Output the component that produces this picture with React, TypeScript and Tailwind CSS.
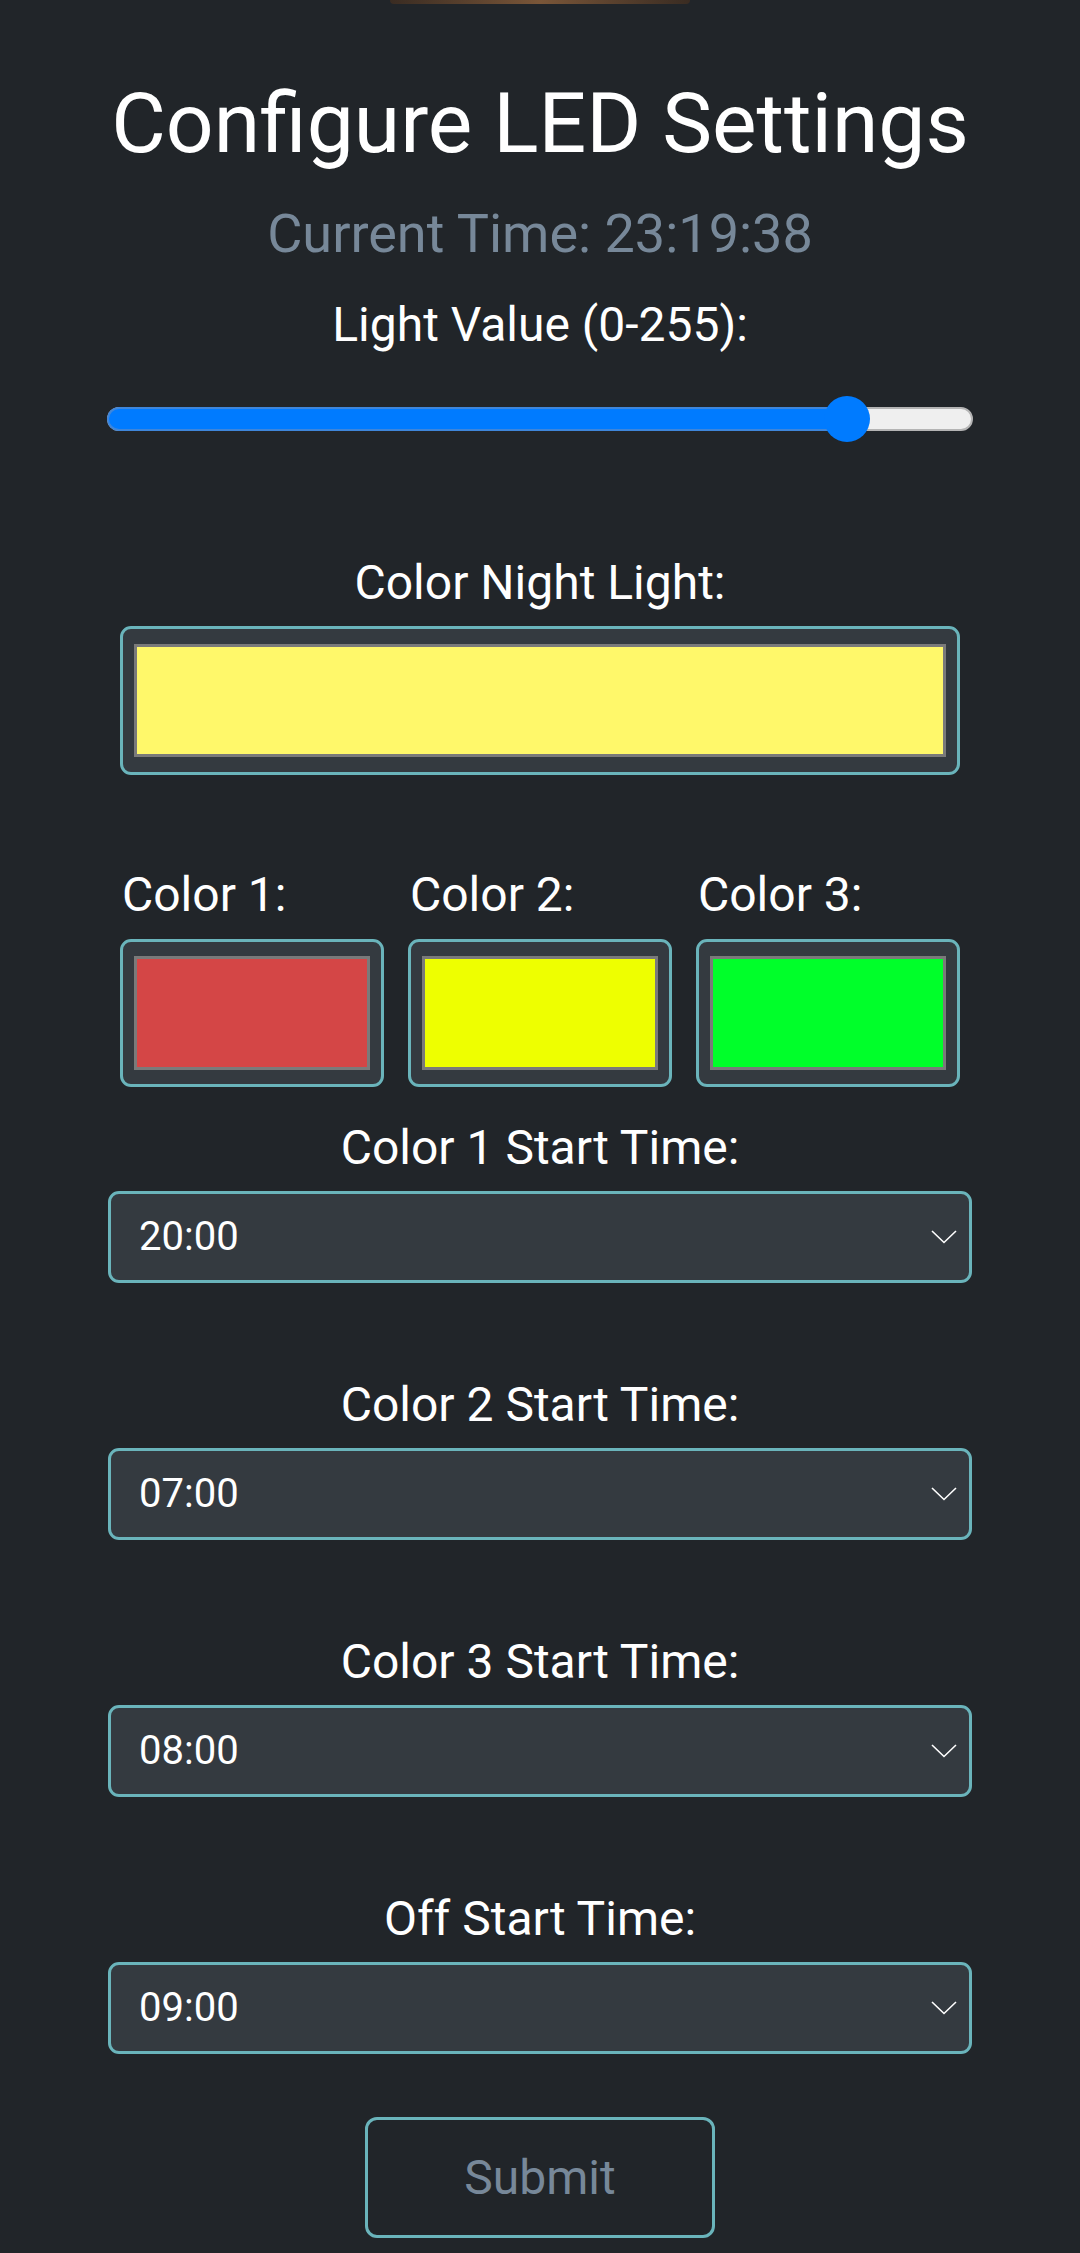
import { useState } from "react"

const swatches = [
	{ label: "Color 1:", color: "bg-[#d44646]" },
	{ label: "Color 2:", color: "bg-[#eeff00]" },
	{ label: "Color 3:", color: "bg-[#00ff2a]" },
]

const schedules = [
	{ label: "Color 1 Start Time:", value: "20:00" },
	{ label: "Color 2 Start Time:", value: "07:00" },
	{ label: "Color 3 Start Time:", value: "08:00" },
	{ label: "Off Start Time:", value: "09:00" },
]

const Chevron = () => (
	<svg width="26" height="14" viewBox="0 0 26 14" fill="none" className="shrink-0">
		<polyline points="1,1 13,12.5 25,1" stroke="#ffffff" strokeWidth="1.6" />
	</svg>
)

const TimeSelect = ({ label, value, first }: { label: string; value: string; first: boolean }) => (
	<div className={first ? "mt-[34px] flex flex-col" : "mt-[95px] flex flex-col"}>
		<div className="text-center text-[48px] leading-[53px] text-white">{label}</div>
		<div className="mt-[17px] mx-[108px] h-[92px] rounded-[11px] border-[3px] border-[#6ab4bb] bg-[#343a40] flex items-center justify-between pl-[28px] pr-[12px]">
			<span className="text-[40px] text-white">{value}</span>
			<Chevron />
		</div>
	</div>
)

export default function App() {
	const [light] = useState(218)
	const pct = (light / 255) * 100

	return (
		<div className="min-h-[2253px] w-[1080px] bg-[#212529] font-[family-name:Roboto,sans-serif] flex flex-col">
			<div className="mx-auto w-[300px] h-[4px] rounded-b-full bg-gradient-to-r from-[#3a2c22] via-[#7a5638] to-[#3a2c22]" />

			<h1 className="mt-[70px] text-center text-[84px] leading-[100px] text-white">Configure LED Settings</h1>
			<div className="mt-[30px] text-center text-[54px] leading-[60px] text-[#778899]">Current Time: 23:19:38</div>
			<div className="mt-[34px] text-center text-[48px] leading-[53px] text-white">Light Value (0-255):</div>

			<div className="mt-[44px] mx-[107px] h-[48px] relative flex items-center">
				<div className="w-full h-[24px] rounded-full bg-[#efefef] border-[2px] border-[#b4b4b4]" />
				<div
					className="absolute left-0 h-[24px] rounded-l-full bg-[#007bff] border-[2px] border-r-0 border-[#3f86da]"
					style={{ width: `${pct}%` }}
				/>
				<div
					className="absolute w-[46px] h-[46px] -ml-[23px] rounded-full bg-[#007bff]"
					style={{ left: `${pct}%` }}
				/>
			</div>

			<div className="mt-[113px] text-center text-[48px] leading-[53px] text-white">Color Night Light:</div>
			<div className="mt-[17px] mx-[120px] h-[149px] rounded-[11px] border-[3px] border-[#6ab4bb] bg-[#343a40] px-[11px] py-[15px] flex">
				<div className="flex-1 border-[3px] border-[#7a7a7a] bg-[#fff86a]" />
			</div>

			<div className="mt-[93px] mx-[120px] grid grid-cols-3 gap-x-[24px]">
				{swatches.map((s) => (
					<div key={s.label} className="flex flex-col">
						<div className="pl-[2px] text-[48px] leading-[53px] text-white">{s.label}</div>
						<div className="mt-[18px] h-[148px] rounded-[11px] border-[3px] border-[#6ab4bb] bg-[#343a40] px-[11px] py-[14px] flex">
							<div className={`flex-1 border-[3px] border-[#7a7a7a] ${s.color}`} />
						</div>
					</div>
				))}
			</div>

			{schedules.map((s, i) => (
				<TimeSelect key={s.label} label={s.label} value={s.value} first={i === 0} />
			))}

			<button className="mt-[63px] mx-auto w-[350px] h-[121px] rounded-[12px] border-[3px] border-[#6ab4bb] bg-transparent text-[48px] text-[#778899]">
				Submit
			</button>
		</div>
	)
}
